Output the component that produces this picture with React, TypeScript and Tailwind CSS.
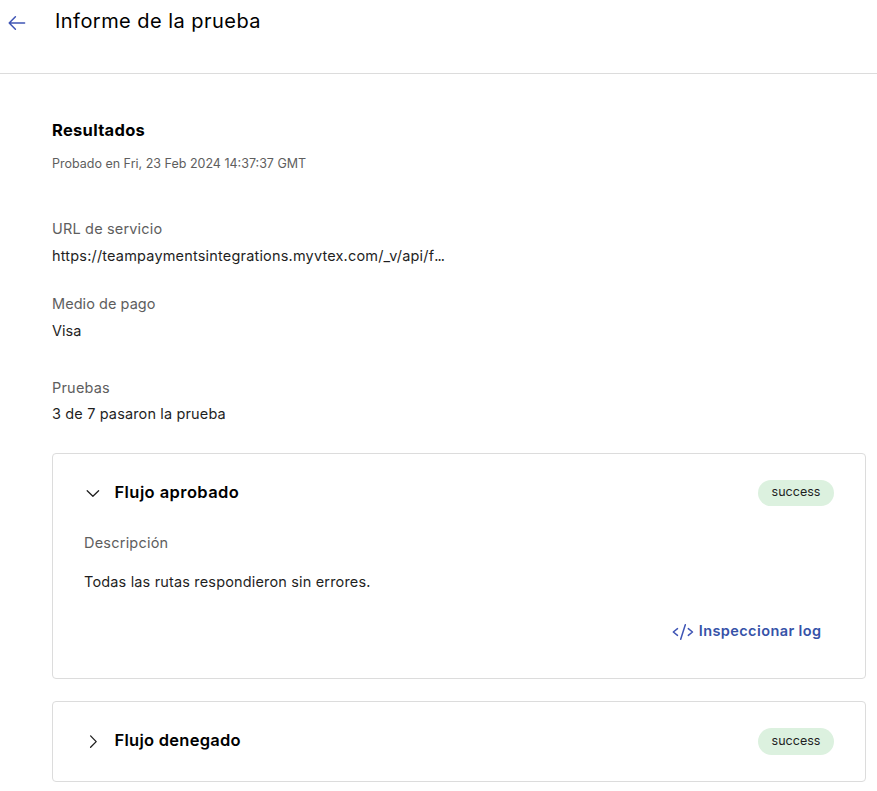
import React from "react";

function Field({ label, value, className, labelClass, valueClass }: { label: string; value: React.ReactNode; className: string; labelClass: string; valueClass: string }) {
  return (
    <div className={className}>
      <div className={`h-5 text-[14.5px] leading-5 text-[#5e5e5e] ${labelClass}`}>{label}</div>
      <div className={`h-5 text-[14.5px] leading-5 text-[#1f1f1f] ${valueClass}`}>{value}</div>
    </div>
  );
}

function Chevron({ open }: { open: boolean }) {
  return (
    <svg width="16" height="16" viewBox="0 0 16 16" fill="none" stroke="#1f1f1f" strokeWidth="1.3" strokeLinecap="round" strokeLinejoin="round">
      <path d={open ? "M3.2 5.7 8.9 11.2 14.6 5.7" : "M6.6 2.9 12.2 8.6 6.6 14.3"} />
    </svg>
  );
}

function Flow({ title, open, titleClass, badgeClass, children }: { title: string; open: boolean; titleClass: string; badgeClass: string; children?: React.ReactNode }) {
  return (
    <section className={`rounded border border-[#dcdcdc] px-[31px] pt-[25px] ${open ? "h-[226px]" : "h-[81px]"}`}>
      <header className="flex h-[27px] items-center">
        <Chevron open={open} />
        <h3 className={`ml-[14.5px] h-[27px] text-[16.5px] font-semibold leading-[27px] text-black ${titleClass}`}>{title}</h3>
        <span className={`ml-auto w-[76px] rounded-full bg-[#dcf1df] text-center text-[12.5px] text-[#1f1f1f] ${badgeClass}`}>success</span>
      </header>
      {children}
    </section>
  );
}

export default function App() {
  return (
    <div className="h-[791px] w-[877px] overflow-hidden bg-white font-['Inter',sans-serif]">
      <header className="flex h-[74px] items-start border-b border-[#dcdcdc] pl-[8px]">
        <svg className="mt-[14px]" width="18" height="18" viewBox="0 0 18 18" fill="none" stroke="#3f55b5" strokeWidth="1.5" strokeLinecap="round" strokeLinejoin="round">
          <path d="M16.6 9H1.2M7.4 2.7 1.2 9l6.2 6.3" />
        </svg>
        <h1 className="ml-[29px] mt-[7px] h-7 text-[20px] leading-7 tracking-[0.46px] text-black">Informe de la prueba</h1>
      </header>
      <main className="pl-[52px] pr-[11px] pt-[46px]">
        <h2 className="h-5 text-[16.5px] font-bold leading-5 tracking-[0.3px] text-black">Resultados</h2>
        <p className="mt-[14px] h-5 text-[12.5px] leading-5 text-[#5e5e5e]">Probado en Fri, 23 Feb 2024 14:37:37 GMT</p>
        <Field
          className="mt-[45px]"
          label="URL de servicio"
          labelClass="tracking-[0.17px]"
          value={<>https://teampaymentsintegrations.myvtex.com/_v/api/f<span className="tracking-[-0.9px]">...</span></>}
          valueClass="mt-[7px] tracking-[0.18px]"
        />
        <Field className="mt-[28px]" label="Medio de pago" labelClass="tracking-[0.05px]" value="Visa" valueClass="mt-[7px]" />
        <Field className="mt-[37px]" label="Pruebas" labelClass="tracking-[0.2px]" value="3 de 7 pasaron la prueba" valueClass="mt-[6px] tracking-[0.14px]" />
        <div className="mt-[29px] flex flex-col gap-[22px]">
          <Flow title="Flujo aprobado" open titleClass="tracking-[0.42px]" badgeClass="h-[26px] leading-[24px]">
            <p className="mt-[27px] h-5 text-[14.5px] leading-5 tracking-[0.22px] text-[#5e5e5e]">Descripción</p>
            <p className="mt-[19px] h-5 text-[14.5px] leading-5 tracking-[0.16px] text-[#1f1f1f]">Todas las rutas respondieron sin errores.</p>
            <div className="mt-[29px] flex justify-end pr-[12.5px] text-[#3652a8]">
              <svg className="mt-[1px]" width="22" height="20" viewBox="0 0 22 20" fill="none" stroke="#3f55b5" strokeWidth="1.5" strokeLinecap="round" strokeLinejoin="round">
                <path d="M5.5 6.6 1.3 10l4.2 3.4M16.3 6.6l4.2 3.4-4.2 3.4M13.3 2.8 8.7 17.2" />
              </svg>
              <span className="ml-[5px] h-5 text-[14.5px] font-semibold leading-5 tracking-[0.4px]">Inspeccionar log</span>
            </div>
          </Flow>
          <Flow title="Flujo denegado" open={false} titleClass="tracking-[0.26px]" badgeClass="mt-[2px] h-[27px] leading-[25px]" />
        </div>
      </main>
    </div>
  );
}
